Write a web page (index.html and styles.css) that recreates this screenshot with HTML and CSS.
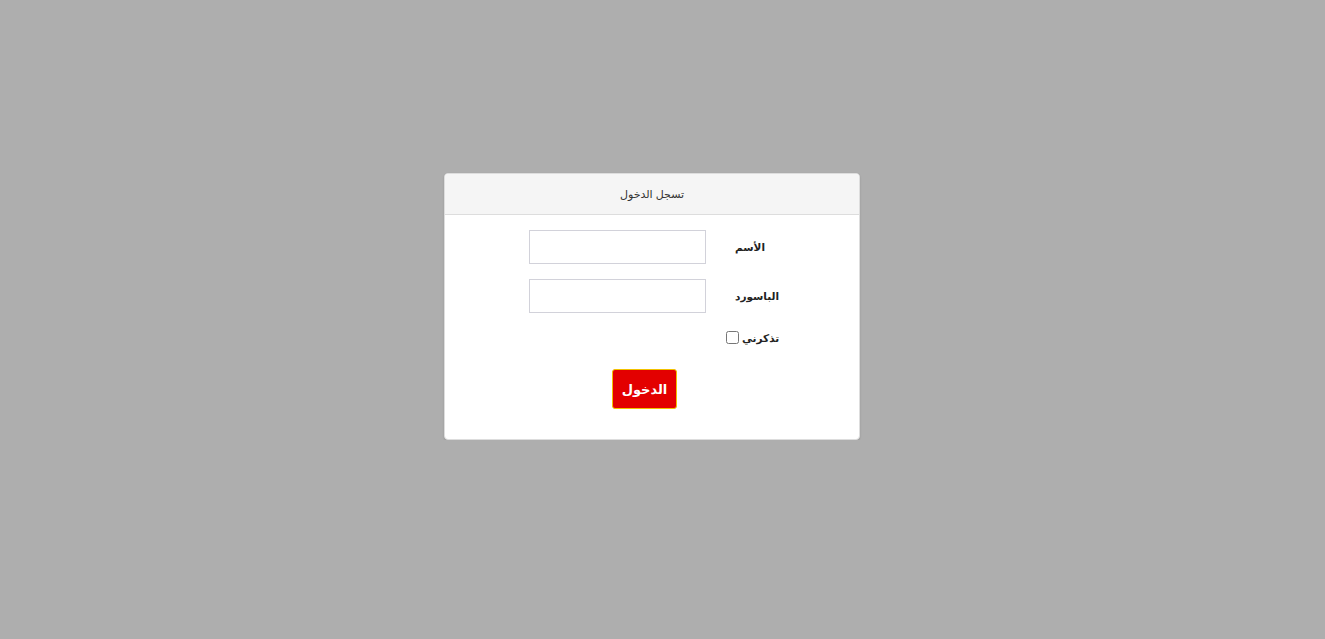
FILE: index.html
```html
<!DOCTYPE html>
<html lang="ar">
<head>
  <meta charset="UTF-8">
  <meta name="viewport" content="width=device-width, initial-scale=1.0">
  <title>تسجل الدخول</title>
  <link rel="stylesheet" href="styles.css">
</head>
<body>
  <div class="panel">
    <div class="panel-heading">تسجل الدخول</div>
    <form class="panel-body">
      <div class="row">
        <input type="text" class="field">
        <label class="label">الأسم</label>
      </div>
      <div class="row">
        <input type="password" class="field">
        <label class="label">الباسورد</label>
      </div>
      <div class="row remember">
        <input type="checkbox" id="remember">
        <label for="remember" class="label">تذكرني</label>
      </div>
      <div class="row submit">
        <button type="button" class="btn">الدخول</button>
      </div>
    </form>
  </div>
</body>
</html>
```

FILE: styles.css
```css
* {
  box-sizing: border-box;
}
body {
  margin: 0;
  background-color: #aeaeae;
  font-family: "Liberation Sans", "DejaVu Sans", sans-serif;
  color: #333;
}
.panel {
  width: 416px;
  margin: 173px 0 0 444px;
  background: white;
  border: 1px solid #ddd;
  border-radius: 4px;
  box-shadow: 0 1px 2px rgba(0,0,0,0.15);
}
.panel-heading {
  height: 41px;
  line-height: 40px;
  background-color: #f5f5f5;
  border-bottom: 1px solid #ddd;
  border-radius: 3px 3px 0 0;
  text-align: center;
  font-size: 11px;
  color: #333;
}
.panel-body {
  padding: 15px 0 30px 0;
  display: flex;
  flex-direction: column;
}
.row {
  display: flex;
  align-items: center;
  padding-left: 84px;
  margin-bottom: 15px;
}
.field {
  width: 177px;
  height: 34px;
  border: 1px solid #d2d2da;
  margin: 0 29px 0 0;
  padding: 4px 6px;
  font-size: 13px;
}
.label {
  font-size: 10.5px;
  font-weight: bold;
  color: #222;
}
.remember {
  padding-left: 281px;
  margin-top: 3px;
  margin-bottom: 0;
}
.remember input {
  width: 13px;
  height: 13px;
  margin: 0 3px 0 0;
}
.submit {
  padding-left: 167px;
  margin-top: 25px;
  margin-bottom: 0;
}
.btn {
  width: 65px;
  height: 40px;
  background-color: #e30000;
  color: white;
  border: 1px solid #f2c200;
  border-radius: 3px;
  font-family: "Liberation Sans", "DejaVu Sans", sans-serif;
  font-size: 13px;
  font-weight: bold;
  cursor: pointer;
  padding: 0;
}
```
